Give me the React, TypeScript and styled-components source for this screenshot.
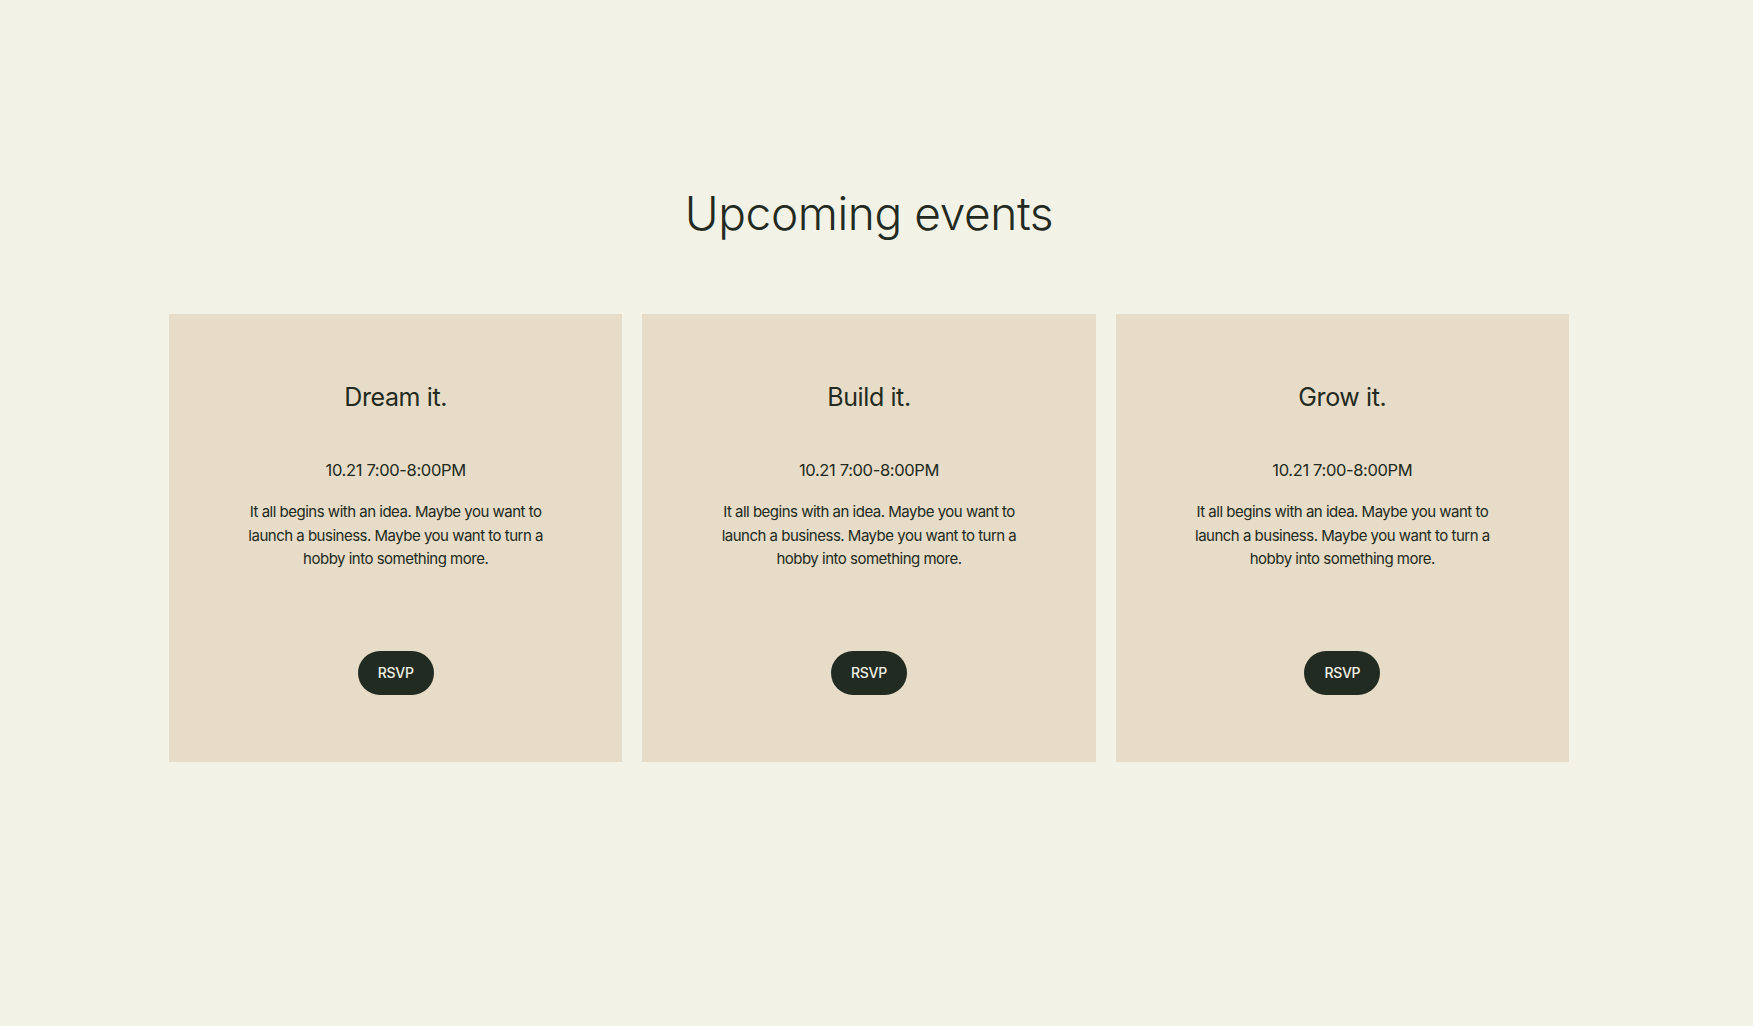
import React from "react";
import styled, { createGlobalStyle } from "styled-components";

const GlobalStyle = createGlobalStyle`
  html, body {
    margin: 0;
    padding: 0;
    background: #f3f2e7;
  }
  body {
    font-family: Inter, "Liberation Sans", sans-serif;
    color: #222a21;
    -webkit-font-smoothing: antialiased;
  }
`;

const Page = styled.main`
  min-height: 1026px;
  box-sizing: border-box;
  padding: 186px 15px 0 0;
  display: flex;
  flex-direction: column;
  align-items: center;
`;

const Heading = styled.h1`
  margin: 0;
  font-size: 46px;
  line-height: 55px;
  font-weight: 300;
  letter-spacing: -0.4px;
  color: #222a21;
`;

const Grid = styled.section`
  margin-top: 73px;
  width: 1400px;
  display: grid;
  grid-template-columns: repeat(3, 1fr);
  gap: 20px;
`;

const Card = styled.article`
  background: #e7dcc7;
  box-sizing: border-box;
  height: 448px;
  padding: 67px 40px 0;
  display: flex;
  flex-direction: column;
  align-items: center;
  text-align: center;
`;

const Title = styled.h2`
  margin: 0;
  font-size: 25px;
  line-height: 32.5px;
  font-weight: 400;
  letter-spacing: -0.4px;
`;

const DateLine = styled.p`
  margin: 44px 0 0;
  font-size: 16.5px;
  line-height: 25.5px;
  font-weight: 400;
  letter-spacing: -0.35px;
`;

const Body = styled.p`
  margin: 17px 0 0;
  max-width: 300px;
  font-size: 15px;
  line-height: 23.5px;
  font-weight: 400;
  letter-spacing: -0.5px;
`;

const Button = styled.button`
  margin-top: 80px;
  width: 76px;
  height: 44px;
  border: none;
  border-radius: 22px;
  background: #222b21;
  color: #f3f2e7;
  font-family: Inter, "Liberation Sans", sans-serif;
  font-size: 14px;
  font-weight: 500;
  letter-spacing: -0.3px;
  cursor: pointer;
  padding: 0;
`;

const events = [
  { title: "Dream it." },
  { title: "Build it." },
  { title: "Grow it." },
];

export default function App() {
  return (
    <>
      <GlobalStyle />
      <Page>
        <Heading>Upcoming events</Heading>
        <Grid>
          {events.map((e) => (
            <Card key={e.title}>
              <Title>{e.title}</Title>
              <DateLine>10.21 7:00-8:00PM</DateLine>
              <Body>
                It all begins with an idea. Maybe you want to launch a business. Maybe you want to turn a hobby into something more.
              </Body>
              <Button>RSVP</Button>
            </Card>
          ))}
        </Grid>
      </Page>
    </>
  );
}
